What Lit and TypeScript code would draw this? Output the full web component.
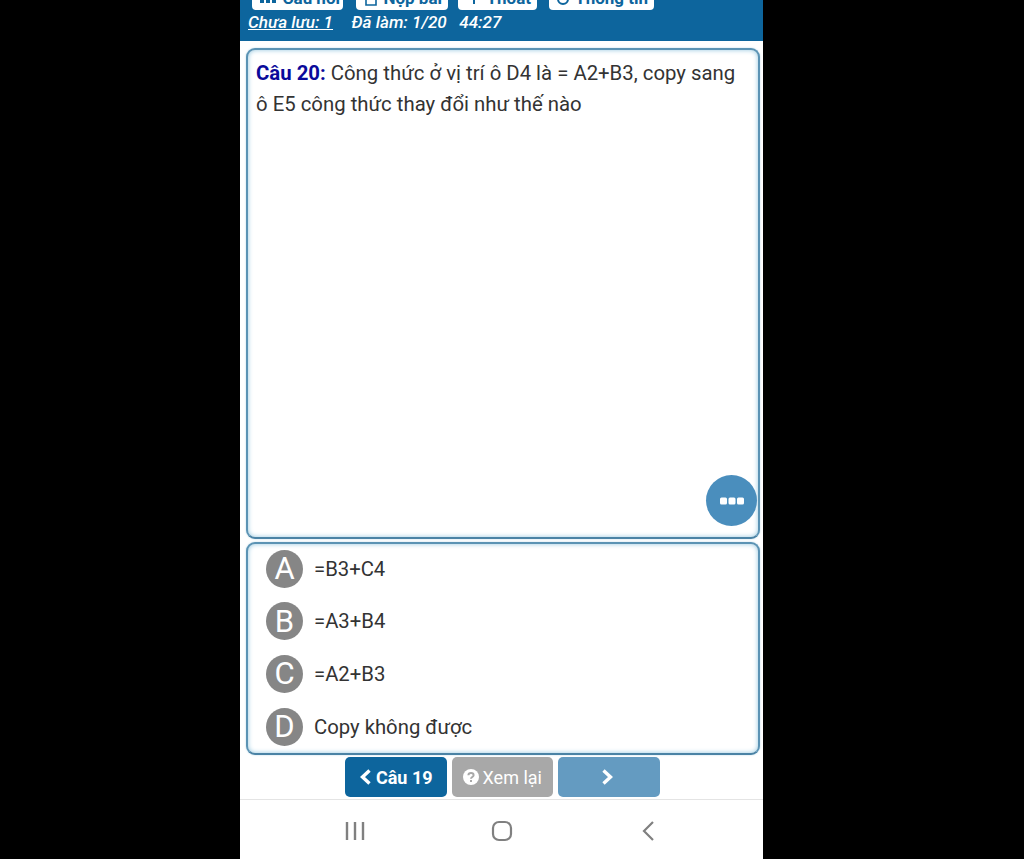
import { LitElement, html, css } from "lit";
import { customElement } from "lit/decorators.js";

const opts: [string, string][] = [
  ["A", "=B3+C4"],
  ["B", "=A3+B4"],
  ["C", "=A2+B3"],
  ["D", "Copy không được"],
];

@customElement("app-root")
export class AppRoot extends LitElement {
  static styles = css`
    :host { display: block; width: 1024px; height: 859px; background: #000; overflow: hidden; font-family: Roboto, "Liberation Sans", sans-serif; }
    .phone { width: 523px; height: 859px; margin-left: 240px; background: #fff; display: flex; flex-direction: column; overflow: hidden; }
    .head { height: 41px; flex: none; background: #0d659d; color: #fff; overflow: hidden; box-sizing: border-box; padding: 0 0 0 8px; }
    .tools { height: 9.5px; display: flex; align-items: flex-end; overflow: hidden; }
    .tool { height: 24px; box-sizing: border-box; background: #fff; color: #0d659d; border-radius: 4px; font-size: 17px; line-height: 17px; font-weight: 700; padding: 0 6px 3px 0; display: flex; align-items: flex-end; justify-content: flex-end; gap: 6px; white-space: nowrap; overflow: hidden; flex: none; }
    .tool svg { display: block; flex: none; }
    .t1 { width: 91px; margin-left: 4px; margin-right: 13px; padding-right: 3px; }
    .t2 { width: 92px; margin-right: 10px; }
    .t3 { width: 79px; margin-right: 12px; }
    .t4 { width: 105px; }
    .status { display: flex; font-size: 17.1px; font-style: italic; font-weight: 500; margin-top: 3.5px; line-height: 19px; }
    .status u { margin-right: 18.5px; }
    .status span { margin-right: 12.5px; }
    .box { box-sizing: border-box; margin: 0 3px 0 6px; border: 2px solid #5b93b4; border-bottom-color: #4b83a5; border-radius: 9px; box-shadow: inset 0 0 5px #93c6df, 0 0 2px #b6d6e6; background: #fff; position: relative; flex: none; }
    .q { margin-top: 7px; height: 491px; padding: 8px 8px; font-size: 20.35px; line-height: 30.6px; color: #333; }
    .q p { margin: 0; width: 486px; }
    .q b { color: #0a0a9a; font-weight: 700; }
    .fab { position: absolute; right: 1px; bottom: 11px; width: 51px; height: 51px; border-radius: 50%; background: #4a8ebd; display: flex; align-items: center; justify-content: center; }
    .a { margin-top: 3px; height: 213px; padding: 6px 0 0 18px; display: flex; flex-direction: column; gap: 15px; }
    .opt { display: flex; align-items: center; height: 37.6px; gap: 11px; font-size: 20.3px; color: #333; }
    .ltr { width: 37px; height: 38px; border-radius: 50%; background: #868686; color: #fff; font-size: 31px; display: flex; align-items: center; justify-content: center; flex: none; }
    .nav { display: flex; gap: 5px; margin: 2px 0 0 105px; flex: none; }
    .btn { width: 101.5px; height: 40px; border-radius: 5px; color: #fff; font-size: 18px; display: flex; align-items: center; justify-content: center; gap: 4px; box-sizing: border-box; }
    .prev { background: #0d659d; font-weight: 700; }
    .rev { background: #a8a8a8; }
    .next { background: #649bc1; }
    .next svg { margin-right: 2px; }
    .sys { margin-top: 2px; flex: 1; border-top: 1px solid #e4e4e4; display: flex; align-items: center; padding-top: 3px; }
    .sys svg { display: block; flex: none; }
    .s1 { margin-left: 105px; }
    .s2 { margin-left: 126px; }
    .s3 { margin-left: 128px; }
  `;

  render() {
    return html`<div class="phone">
      <div class="head">
        <div class="tools">
          <div class="tool t1"><svg width="16" height="14" viewBox="0 0 16 14"><path d="M0 0H4V10H0ZM6 0H10V10H6ZM12 0H16V10H12Z" fill="#0d659d"/></svg>Câu hỏi</div>
          <div class="tool t2"><svg width="12" height="14" viewBox="0 0 12 14"><path d="M1 0V12H11V0" fill="none" stroke="#0d659d" stroke-width="1.6"/></svg>Nộp bài</div>
          <div class="tool t3"><svg width="12" height="14" viewBox="0 0 12 14"><path d="M6 0V11" stroke="#0d659d" stroke-width="2"/></svg>Thoát</div>
          <div class="tool t4"><svg width="12" height="14" viewBox="0 0 12 14"><circle cx="6" cy="6" r="5" fill="none" stroke="#0d659d" stroke-width="2"/></svg>Thông tin</div>
        </div>
        <div class="status"><u>Chưa lưu: 1</u><span>Đã làm: 1/20</span><span>44:27</span></div>
      </div>
      <div class="box q">
        <p><b>Câu 20:</b> Công thức ở vị trí ô D4 là = A2+B3, copy sang ô E5 công thức thay đổi như thế nào</p>
        <div class="fab"><svg width="24" height="8" viewBox="0 0 24 8"><rect x="0" y="0.5" width="7" height="7" rx="1.5" fill="#fff"/><rect x="8.5" y="0.5" width="7" height="7" rx="1.5" fill="#fff"/><rect x="17" y="0.5" width="7" height="7" rx="1.5" fill="#fff"/></svg></div>
      </div>
      <div class="box a">
        ${opts.map(([l, t]) => html`<div class="opt"><div class="ltr">${l}</div><div>${t}</div></div>`)}
      </div>
      <div class="nav">
        <div class="btn prev"><svg width="13" height="16" viewBox="0 0 13 16"><path d="M10.5 1.5 L3.5 8 L10.5 14.5" fill="none" stroke="#fff" stroke-width="3.4"/></svg>Câu 19</div>
        <div class="btn rev"><svg width="16" height="16" viewBox="0 0 16 16"><circle cx="8" cy="8" r="8" fill="#fff"/><path d="M5.4 6.2 C5.5 3.2 10.6 3.2 10.6 6.2 C10.6 8 8 8 8 9.8" fill="none" stroke="#a8a8a8" stroke-width="2"/><rect x="7" y="11" width="2" height="2" fill="#a8a8a8"/></svg>Xem lại</div>
        <div class="btn next"><svg width="13" height="16" viewBox="0 0 13 16"><path d="M2.5 1.5 L9.5 8 L2.5 14.5" fill="none" stroke="#fff" stroke-width="3.4"/></svg></div>
      </div>
      <div class="sys">
        <svg class="s1" width="20" height="20" viewBox="0 0 20 20"><path d="M2 1V19M10 1V19M18 1V19" stroke="#808080" stroke-width="2.4"/></svg>
        <svg class="s2" width="22" height="22" viewBox="0 0 22 22"><rect x="2" y="2" width="18" height="18" rx="6" fill="none" stroke="#808080" stroke-width="2.2"/></svg>
        <svg class="s3" width="14" height="22" viewBox="0 0 14 22"><path d="M12 2 L3 11 L12 20" fill="none" stroke="#808080" stroke-width="2.2"/></svg>
      </div>
    </div>`;
  }
}
